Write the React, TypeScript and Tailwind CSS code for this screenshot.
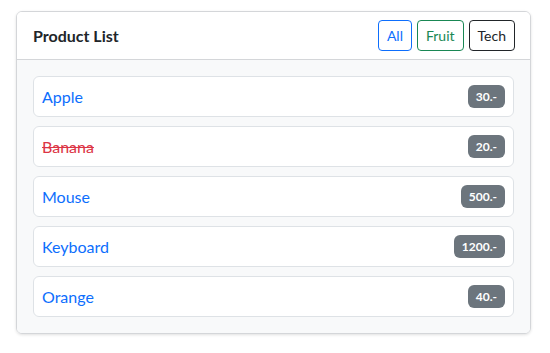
const products = [
  { name: "Apple", price: 30, done: false },
  { name: "Banana", price: 20, done: true },
  { name: "Mouse", price: 500, done: false },
  { name: "Keyboard", price: 1200, done: false },
  { name: "Orange", price: 40, done: false },
];

export default function App() {
  return (
    <div className="min-h-[353px] bg-white pl-4 pt-[11px] font-['Lato',sans-serif]">
      <div className="w-[515px] rounded-md border border-[#d4d6d9] shadow-[0_1px_3px_rgba(0,0,0,0.12)] overflow-hidden">
        {/* header */}
        <div className="flex h-[48px] items-center justify-between border-b border-[#d4d6d9] bg-white pl-4 pr-[15px]">
          <h2 className="text-base font-bold text-[#212529]">Product List</h2>
          <div className="flex gap-[5px]">
            <button className="h-[31px] rounded border border-[#0d6efd] px-2 text-sm text-[#0d6efd]">All</button>
            <button className="h-[31px] rounded border border-[#198754] px-2 text-sm text-[#198754]">Fruit</button>
            <button className="h-[31px] rounded border border-[#212529] px-2 text-sm text-[#212529]">Tech</button>
          </div>
        </div>

        {/* list */}
        <div className="flex flex-col gap-[9px] bg-[#f8f9fa] px-4 pt-4 pb-4">
          {products.map((p) => (
            <div
              key={p.name}
              className="flex h-[41px] items-center justify-between rounded-md border border-[#dee2e6] bg-white pl-2 pr-2"
            >
              <span
                className={
                  p.done
                    ? "text-base text-[#dc3545] line-through"
                    : "text-base text-[#0d6efd]"
                }
              >
                {p.name}
              </span>
              <span className="rounded-md bg-[#6c757d] px-2 py-1 text-xs font-bold leading-[15px] text-white">
                {p.price}.-
              </span>
            </div>
          ))}
        </div>
      </div>
    </div>
  );
}
